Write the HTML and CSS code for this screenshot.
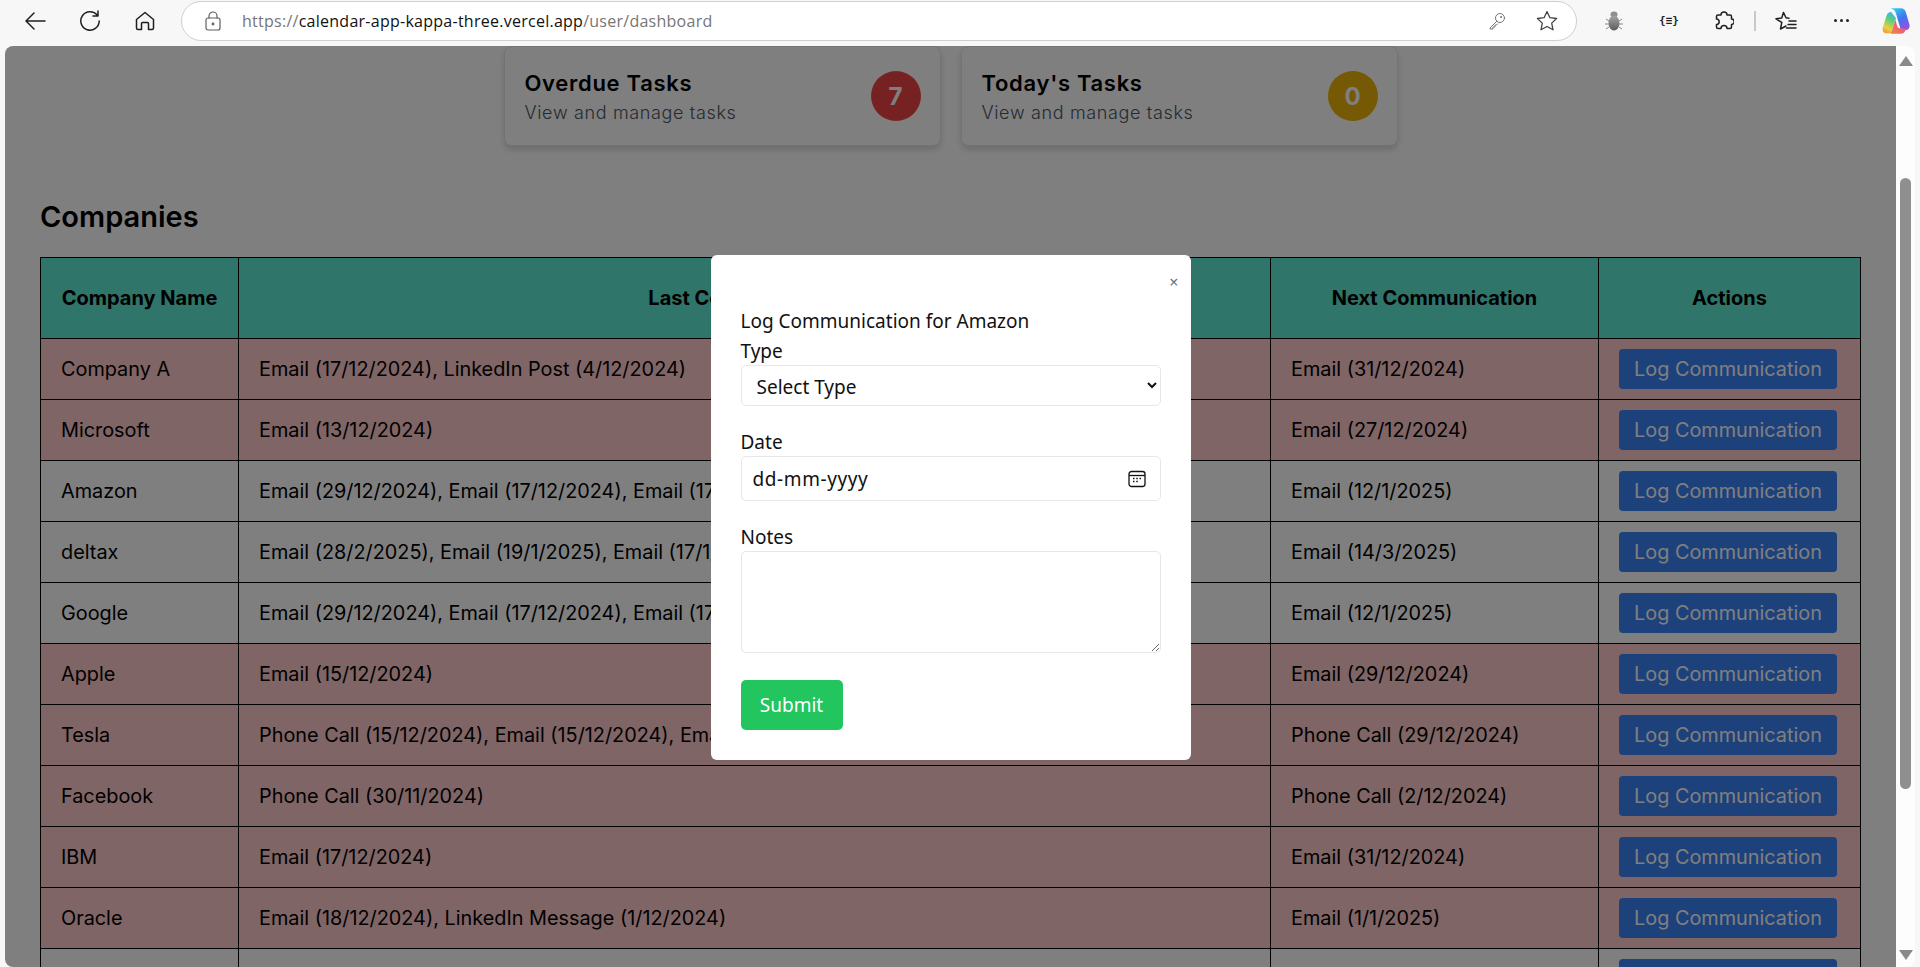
FILE: index.html
```html
<!DOCTYPE html>
<html lang="en">
<head>
  <meta charset="UTF-8">
  <meta name="viewport" content="width=device-width, initial-scale=1.0">
  <title>User Dashboard</title>
  <link rel="stylesheet" href="styles.css">
</head>
<body>

  <!-- browser toolbar -->
  <div class="toolbar">
    <span class="tool">
      <svg width="22" height="20" viewBox="0 0 22 20" class="ico"><path d="M21 10H2M10 2l-8 8 8 8"/></svg>
    </span>
    <span class="tool">
      <svg width="22" height="22" viewBox="0 0 22 22" class="ico"><path d="M18.2 5.2A9.2 9.2 0 1 0 20.2 11M19 1v5h-5"/></svg>
    </span>
    <span class="tool">
      <svg width="20" height="20" viewBox="0 0 20 20" class="ico"><path d="M1.5 8.5 10 1.5l8.500 7v8.500a1.500 1.500 0 0 1-1.500 1.500h-3.500v-6a1 1 0 0 0-1-1h-5a1 1 0 0 0-1 1v6H3a1.500 1.500 0 0 1-1.500-1.500z"/></svg>
    </span>
    <div class="urlbar">
      <svg width="16" height="20" viewBox="0 0 16 20" class="ico ico-grey"><rect x="1" y="7" width="14" height="12" rx="2"/><path d="M4 7V5a4 4 0 0 1 8 0v2"/><circle cx="8" cy="13" r="0.8"/></svg>
      <span class="url"><span class="url-dim">https://</span>calendar-app-kappa-three.vercel.app<span class="url-dim">/user/dashboard</span></span>
      <svg width="18" height="18" viewBox="0 0 18 18" class="ico ico-key"><circle cx="12" cy="6" r="4.500"/><path d="M8.800 9.200 2 16v1h3v-2h2v-2h1.500l1.200-1.200"/><circle cx="13" cy="5" r="0.600"/></svg>
      <svg width="22" height="21" viewBox="0 0 22 21" class="ico ico-dark"><path d="M11 1.500 13.900 7.700 20.600 8.500 15.700 13.100 17 19.800 11 16.500 5 19.800 6.300 13.100 1.400 8.500 8.100 7.700z"/></svg>
    </div>
    <span class="tool tool-bug">
      <svg width="18" height="20" viewBox="0 0 18 20"><defs><linearGradient id="bugfill" x1="0" y1="0" x2="0" y2="1"><stop offset="0" stop-color="#a5a5a5"/><stop offset="1" stop-color="#5c5c5c"/></linearGradient></defs><path d="M1 8l3 2M17 8l-3 2M0 13h4M18 13h-4M1 18l3-2M17 18l-3-2" stroke="#8a8a8a" fill="none"/><ellipse cx="9" cy="3.500" rx="3.500" ry="3" fill="#8f8f8f"/><ellipse cx="9" cy="12" rx="5.500" ry="7.500" fill="url(#bugfill)"/></svg>
    </span>
    <span class="tool braces">{≡}</span>
    <span class="tool">
      <svg width="20" height="20" viewBox="0 0 20 20" class="ico"><path d="M7 4a3 3 0 0 1 6 0h3a1.500 1.500 0 0 1 1.500 1.500V8a2.700 2.700 0 0 1 0 5.400v2.600A1.500 1.500 0 0 1 16 17.500h-3a3 3 0 0 0-6 0H4A1.500 1.500 0 0 1 2.500 16v-2.600a2.700 2.700 0 0 0 0-5.400V5.500A1.500 1.500 0 0 1 4 4z"/></svg>
    </span>
    <span class="divider"></span>
    <span class="tool">
      <svg width="22" height="20" viewBox="0 0 22 20" class="ico"><path d="M8.500 1.500 11 6.800l3 .4M6.800 11.400l-1.300 6.600 5.500-3M1 7.800l5.700-.9L8.500 1.500M1 7.800l5.800 3.600M14 10h7M13 13.500h8M11.500 17h9.500"/></svg>
    </span>
    <span class="tool dots"><i></i><i></i><i></i></span>
    <span class="tool tool-copilot">
      <svg width="30" height="30" viewBox="0 0 28 28">
        <defs>
          <linearGradient id="copA" x1="0.200" y1="0" x2="0.800" y2="1"><stop offset="0" stop-color="#35c9ef"/><stop offset="0.5" stop-color="#3f74f2"/><stop offset="1" stop-color="#a04fdc"/></linearGradient>
          <linearGradient id="copB" x1="0.600" y1="0" x2="0.300" y2="1"><stop offset="0" stop-color="#3fb4e8"/><stop offset="0.350" stop-color="#5fcf7a"/><stop offset="0.750" stop-color="#e8d23f"/><stop offset="1" stop-color="#f39a3c"/></linearGradient>
          <linearGradient id="copC" x1="0" y1="1" x2="1" y2="0"><stop offset="0" stop-color="#f5893f"/><stop offset="0.600" stop-color="#ee5a78"/><stop offset="1" stop-color="#d44fc0"/></linearGradient>
        </defs>
        <path d="M9 2h9.500c2.300 0 3.800 1.200 4.500 3.400l3.500 11.600c.9 3-.9 5.500-3.800 5.500h-4.200l-4.500-15.500C13.300 4 11.500 2.600 9 2z" fill="url(#copA)"/>
        <path d="M9.500 5.500c-2.300 0-3.700 1.300-4.300 3.300L1.700 20c-.9 3 .9 5.500 3.800 5.500h4.300l4.200-14z" fill="url(#copB)"/>
        <path d="M8 26h10.500c2.300 0 3.800-1.300 4.500-3.500l.5-1.500H18c-1.500 0-2.500-.8-3-2.500L13.500 13 10 24c-.4 1.200-1 1.800-2 2z" fill="url(#copC)"/>
      </svg>
    </span>
  </div>

  <div class="window">
    <div class="page">
      <div class="content">
        <div class="task-cards">
          <div class="task-card">
            <div class="task-text">
              <div class="task-title">Overdue Tasks</div>
              <div class="task-sub">View and manage tasks</div>
            </div>
            <span class="task-count count-red">7</span>
          </div>
          <div class="task-card">
            <div class="task-text">
              <div class="task-title">Today's Tasks</div>
              <div class="task-sub">View and manage tasks</div>
            </div>
            <span class="task-count count-yellow">0</span>
          </div>
        </div>

        <h2 class="section-title">Companies</h2>

        <table class="companies">
          <colgroup>
            <col class="col-name">
            <col>
            <col class="col-next">
            <col class="col-actions">
          </colgroup>
          <thead>
            <tr>
              <th>Company Name</th>
              <th>Last Communications</th>
              <th>Next Communication</th>
              <th>Actions</th>
            </tr>
          </thead>
          <tbody>
            <tr class="overdue">
              <td>Company A</td>
              <td>Email (17/12/2024), LinkedIn Post (4/12/2024)</td>
              <td>Email (31/12/2024)</td>
              <td><button class="log-btn">Log Communication</button></td>
            </tr>
            <tr class="overdue">
              <td>Microsoft</td>
              <td>Email (13/12/2024)</td>
              <td>Email (27/12/2024)</td>
              <td><button class="log-btn">Log Communication</button></td>
            </tr>
            <tr>
              <td>Amazon</td>
              <td>Email (29/12/2024), Email (17/12/2024), Email (17/12/2024)</td>
              <td>Email (12/1/2025)</td>
              <td><button class="log-btn">Log Communication</button></td>
            </tr>
            <tr>
              <td>deltax</td>
              <td>Email (28/2/2025), Email (19/1/2025), Email (17/1/2025)</td>
              <td>Email (14/3/2025)</td>
              <td><button class="log-btn">Log Communication</button></td>
            </tr>
            <tr>
              <td>Google</td>
              <td>Email (29/12/2024), Email (17/12/2024), Email (17/12/2024)</td>
              <td>Email (12/1/2025)</td>
              <td><button class="log-btn">Log Communication</button></td>
            </tr>
            <tr class="overdue">
              <td>Apple</td>
              <td>Email (15/12/2024)</td>
              <td>Email (29/12/2024)</td>
              <td><button class="log-btn">Log Communication</button></td>
            </tr>
            <tr class="overdue">
              <td>Tesla</td>
              <td>Phone Call (15/12/2024), Email (15/12/2024), Email (15/12/2024)</td>
              <td>Phone Call (29/12/2024)</td>
              <td><button class="log-btn">Log Communication</button></td>
            </tr>
            <tr class="overdue">
              <td>Facebook</td>
              <td>Phone Call (30/11/2024)</td>
              <td>Phone Call (2/12/2024)</td>
              <td><button class="log-btn">Log Communication</button></td>
            </tr>
            <tr class="overdue">
              <td>IBM</td>
              <td>Email (17/12/2024)</td>
              <td>Email (31/12/2024)</td>
              <td><button class="log-btn">Log Communication</button></td>
            </tr>
            <tr class="overdue">
              <td>Oracle</td>
              <td>Email (18/12/2024), LinkedIn Message (1/12/2024)</td>
              <td>Email (1/1/2025)</td>
              <td><button class="log-btn">Log Communication</button></td>
            </tr>
            <tr>
              <td></td>
              <td></td>
              <td></td>
              <td><button class="log-btn"></button></td>
            </tr>
          </tbody>
        </table>
      </div>

      <!-- modal -->
      <div class="overlay">
        <form class="modal">
          <span class="modal-close">×</span>
          <div class="modal-title">Log Communication for Amazon</div>

          <label for="logType">Type</label>
          <select id="logType" class="field field-select">
            <option>Select Type</option>
          </select>

          <label for="logDate">Date</label>
          <div class="field field-date">
            <input type="text" id="logDate" value="dd-mm-yyyy">
            <svg width="18" height="18" viewBox="0 0 18 18" class="cal-icon"><rect x="1" y="1.500" width="16" height="15" rx="2.500"/><path d="M1 5.500h16"/><path class="cal-dots" d="M5 8.500h1.500M8.250 8.500h1.500M11.500 8.500h1.500M5 11.500h1.500M8.250 11.500h1.500"/></svg>
          </div>

          <label for="logNotes">Notes</label>
          <textarea id="logNotes" class="field field-notes"></textarea>

          <button type="button" class="submit-btn">Submit</button>
        </form>
      </div>
    </div>

    <div class="scrollbar">
      <span class="arrow arrow-up"></span>
      <span class="thumb"></span>
      <span class="arrow arrow-down"></span>
    </div>
  </div>

</body>
</html>
```

FILE: styles.css
```css
* {
  box-sizing: border-box;
}

body {
  margin: 0;
  height: 967px;
  overflow: hidden;
  background-color: #f7f7f7;
  font-family: Inter, "Liberation Sans", sans-serif;
}

/* toolbar */
.toolbar {
  display: flex;
  align-items: center;
  gap: 15px;
  height: 46px;
  padding: 0 0 5px 15px;
}

.tool {
  display: flex;
  align-items: center;
  justify-content: center;
  width: 40px;
  height: 36px;
  flex: none;
}

.ico {
  fill: none;
  stroke: #1f1f1f;
  stroke-width: 1.5;
  stroke-linejoin: round;
  stroke-linecap: round;
}

.ico-grey {
  stroke: #5f5f5f;
  stroke-width: 1.2;
}

.ico-dark {
  stroke: #444;
  stroke-width: 1.3;
}

.ico-key {
  margin-left: auto;
  margin-right: 30px;
  stroke: #777;
  stroke-width: 1;
}

.urlbar {
  display: flex;
  align-items: center;
  width: 1396px;
  height: 40px;
  margin-left: 1px;
  margin-right: 2px;
  padding: 0 18px 0 23px;
  flex: none;
  background: #fff;
  border: 1.5px solid #cfcfcf;
  border-radius: 20px;
}

.url {
  margin-left: 21px;
  font-family: "Open Sans", sans-serif;
  font-size: 16px;
  letter-spacing: 0.26px;
  color: #111;
}

.url-dim {
  color: #767676;
}

.braces {
  font-family: "DejaVu Sans Mono", monospace;
  font-size: 11px;
  font-weight: 700;
  color: #222;
}

.divider {
  width: 2px;
  height: 20px;
  margin: 0 -5px 0 -5px;
  background: #c8c8c8;
  flex: none;
}

.dots {
  gap: 3px;
}

.dots i {
  width: 3px;
  height: 3px;
  border-radius: 50%;
  background: #222;
}

/* page + scrollbar */
.window {
  display: flex;
  height: 921px;
  padding: 0 5px;
}

.page {
  position: relative;
  flex: 1;
  overflow: hidden;
  background: #fff;
  border-radius: 8px 0 0 8px;
}

.content {
  padding: 0 35px;
}

.scrollbar {
  display: flex;
  flex-direction: column;
  align-items: center;
  width: 19px;
  padding-top: 10px;
  background: #fdfdfd;
  border-radius: 0 8px 8px 0;
  flex: none;
}

.arrow {
  width: 0;
  height: 0;
  border-left: 7px solid transparent;
  border-right: 7px solid transparent;
}

.arrow-up {
  border-bottom: 10px solid #8a8a8a;
}

.arrow-down {
  margin-top: 161px;
  border-top: 10px solid #8a8a8a;
}

.thumb {
  width: 11px;
  height: 611px;
  margin-top: 112px;
  background: #8f8f8f;
  border-radius: 6px;
}

/* task cards */
.task-cards {
  display: flex;
  justify-content: center;
  gap: 20px;
}

.task-card {
  display: flex;
  align-items: center;
  justify-content: space-between;
  width: 437px;
  height: 100px;
  padding: 0 19px 0 20px;
  background: #fff;
  border: 1px solid #e5e7eb;
  border-radius: 8px;
  box-shadow: 0 4px 6px rgba(0, 0, 0, 0.15);
}

.task-text {
  padding-top: 4px;
}

.task-title {
  font-size: 22px;
  font-weight: 600;
  letter-spacing: 0.7px;
  line-height: 28px;
  color: #000;
}

.task-sub {
  margin-top: 2px;
  font-size: 18px;
  font-weight: 300;
  letter-spacing: 0.65px;
  line-height: 28px;
  color: #4b5563;
}

.task-count {
  display: flex;
  align-items: center;
  justify-content: center;
  width: 50px;
  height: 50px;
  border-radius: 50%;
  font-size: 24px;
  font-weight: 700;
  color: #fff;
}

.count-red {
  background-color: #ef4444;
}

.count-yellow {
  background-color: #eab308;
}

.section-title {
  margin: 53px 0 22px;
  font-size: 29px;
  font-weight: 600;
  line-height: 36px;
  color: #000;
}

/* table */
.companies {
  width: 100%;
  table-layout: fixed;
  border-collapse: collapse;
  font-size: 19.85px;
  color: #000;
}

.col-name {
  width: 198px;
}

.col-next {
  width: 328px;
}

.col-actions {
  width: 262px;
}

.companies th,
.companies td {
  border: 1px solid #000;
  padding: 10px 20px;
}

.companies th {
  height: 81px;
  font-size: 20px;
  font-weight: 700;
  text-align: center;
  background-color: #5eead4;
}

.companies td {
  height: 61px;
  text-align: left;
  white-space: nowrap;
}

.overdue td {
  background-color: #fecaca;
}

.log-btn {
  display: block;
  width: 218px;
  height: 40px;
  padding: 0;
  font-family: inherit;
  font-size: 19.85px;
  color: #fff;
  background-color: #3b82f6;
  border: none;
  border-radius: 4px;
}

/* modal */
.overlay {
  position: absolute;
  top: 0;
  left: 0;
  right: 0;
  bottom: 0;
  display: flex;
  align-items: center;
  justify-content: center;
  background: rgba(0, 0, 0, 0.5);
}

.modal {
  position: relative;
  display: flex;
  flex-direction: column;
  width: 480px;
  height: 505px;
  margin-top: 2px;
  padding: 54px 30px 30px;
  background: #fff;
  border-radius: 6px;
  font-family: "Noto Sans", sans-serif;
  font-size: 19px;
  color: #111;
}

.modal-close {
  position: absolute;
  top: 16px;
  right: 12px;
  font-size: 16px;
  line-height: 22px;
  color: #6b7280;
}

.modal-title {
  line-height: 24px;
}

.modal label {
  display: block;
  line-height: 24px;
  margin-top: 24px;
  margin-bottom: 2px;
}

.modal-title + label {
  margin-top: 6px;
}

.field {
  width: 100%;
  background: #fff;
  border: 1.5px solid #e5e7eb;
  border-radius: 5px;
  font-family: inherit;
  font-size: 19px;
  color: #111;
  flex: none;
}

.field-select {
  height: 41px;
  padding: 2px 8px 0 11px;
}

.field-date {
  display: flex;
  align-items: center;
  justify-content: space-between;
  height: 45px;
  padding: 0 14px 0 11px;
}

.field-date input {
  width: 200px;
  padding: 0;
  border: none;
  outline: none;
  font-family: inherit;
  font-size: 19px;
  letter-spacing: 0.6px;
  color: #111;
}

.cal-icon {
  fill: none;
  stroke: #111;
  stroke-width: 1.3;
}

.cal-dots {
  stroke-width: 1.6;
}

.field-notes {
  display: block;
  height: 102px;
  padding: 8px;
}

.submit-btn {
  width: 102px;
  height: 50px;
  margin-top: 27px;
  padding: 0;
  font-family: inherit;
  font-size: 19px;
  color: #fff;
  background-color: #22c55e;
  border: none;
  border-radius: 5px;
}
```
